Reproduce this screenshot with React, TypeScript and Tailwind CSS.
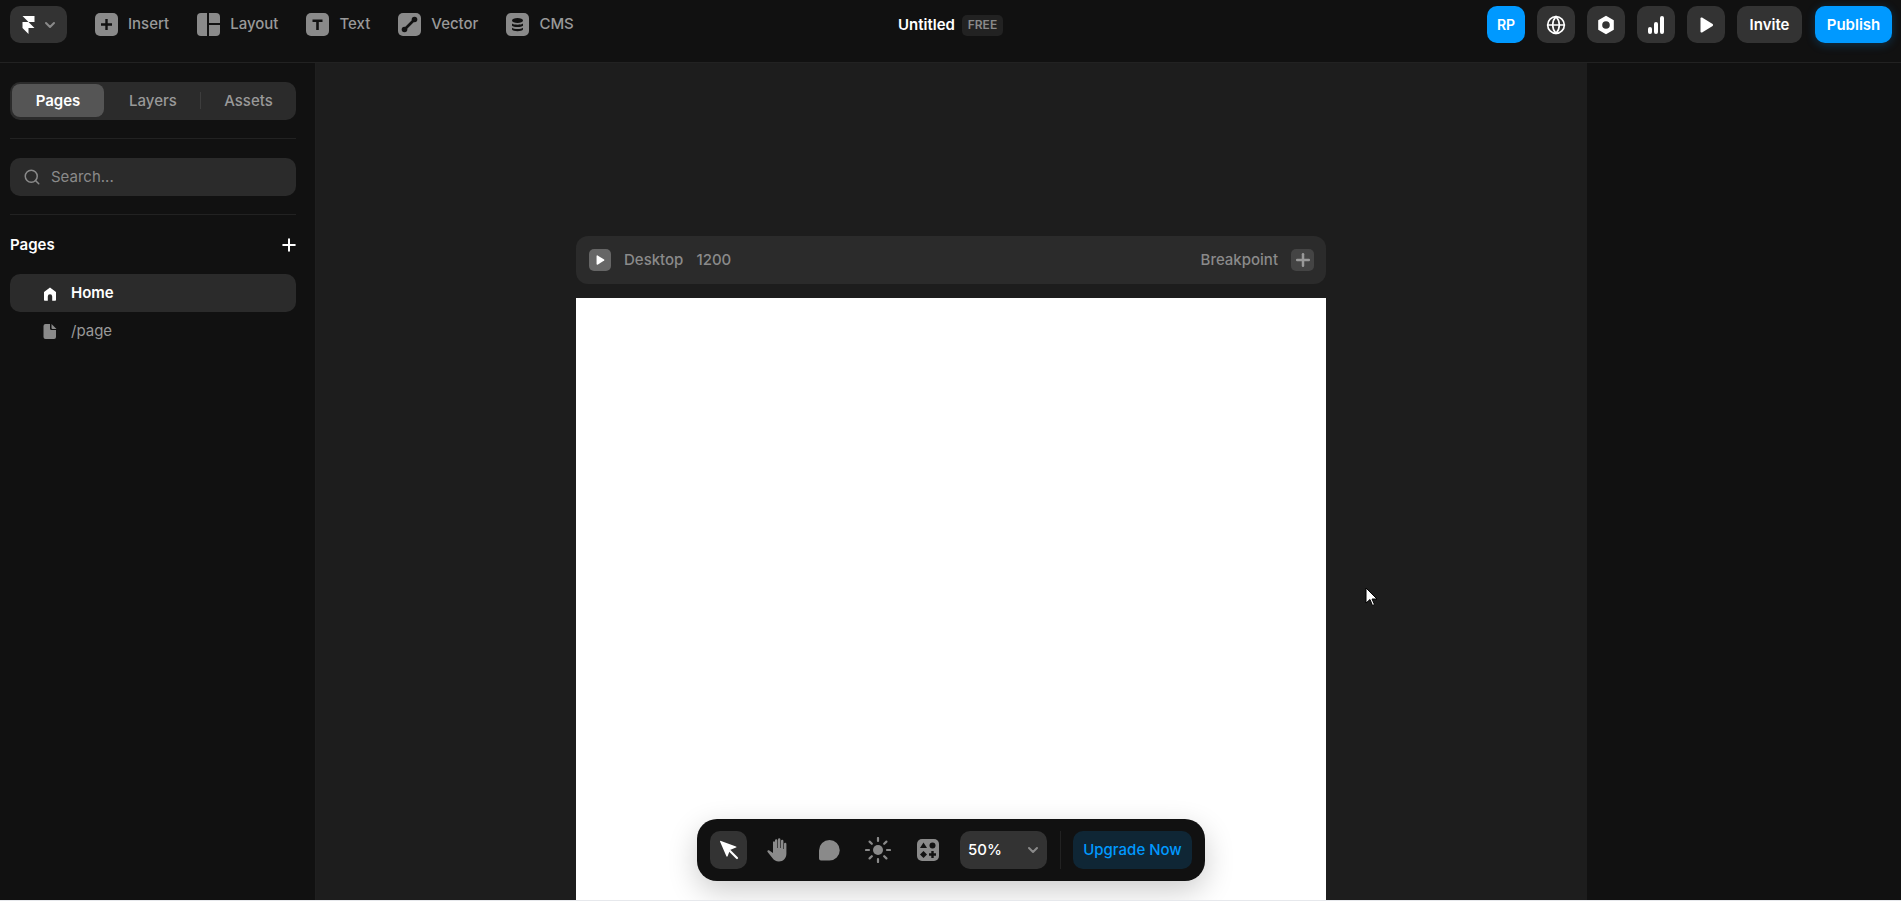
import { ChevronDown, Globe, Plus, Search } from "lucide-react";

const labelFont = { fontFamily: "Inter, sans-serif" };

const ToolIcon = ({ children }: { children: React.ReactNode }) => (
  <svg width="23" height="23" viewBox="0 0 23 23" className="shrink-0">
    {children}
  </svg>
);

const InsertIcon = () => (
  <ToolIcon>
    <rect width="23" height="23" rx="5" fill="#8a8a8a" />
    <path d="M11.5 6v11M6 11.5h11" stroke="#111" strokeWidth="2.4" />
  </ToolIcon>
);

const LayoutIcon = () => (
  <ToolIcon>
    <path d="M4 0h6v23H4a4 4 0 0 1-4-4V4a4 4 0 0 1 4-4z" fill="#8a8a8a" />
    <path d="M12 0h7a4 4 0 0 1 4 4v6H12z" fill="#8a8a8a" />
    <path d="M12 12h11v7a4 4 0 0 1-4 4h-7z" fill="#8a8a8a" />
  </ToolIcon>
);

const TextIcon = () => (
  <ToolIcon>
    <rect width="23" height="23" rx="5" fill="#8a8a8a" />
    <path d="M6.500 6.500h10v2.600h-3.700V17h-2.600V9.100H6.500z" fill="#111" />
  </ToolIcon>
);

const VectorIcon = () => (
  <ToolIcon>
    <rect width="23" height="23" rx="5" fill="#8a8a8a" />
    <path d="M7 16l9-9" stroke="#111" strokeWidth="2.6" />
    <circle cx="6.500" cy="16.500" r="2.800" fill="#111" />
    <circle cx="16.500" cy="6.500" r="2.800" fill="#111" />
  </ToolIcon>
);

const CmsIcon = () => (
  <ToolIcon>
    <rect width="23" height="23" rx="5" fill="#8a8a8a" />
    <ellipse cx="11.500" cy="7.500" rx="5.500" ry="2.600" fill="#111" />
    <path d="M6 10.500c1.500 1.600 9.500 1.600 11 0v2.200c-1.500 1.800-9.500 1.800-11 0z" fill="#111" />
    <path d="M6 14.800c1.500 1.600 9.500 1.600 11 0v1.700c-1 2.300-10 2.300-11 0z" fill="#111" />
  </ToolIcon>
);

const FramerLogo = () => (
  <svg width="13" height="18" viewBox="0 0 16 24" className="shrink-0">
    <path d="M0 0h16v8H8z" fill="#fff" />
    <path d="M0 8h8l8 8H8v8L0 16z" fill="#fff" />
  </svg>
);

const HexIcon = () => (
  <svg width="20" height="20" viewBox="0 0 20 20">
    <path
      fillRule="evenodd"
      d="M10 .8l7.800 4.500v9.400L10 19.200l-7.800-4.500V5.300zM10 6.200a3.800 3.800 0 1 0 0 7.600 3.800 3.800 0 0 0 0-7.600z"
      fill="#fff"
    />
  </svg>
);

const BarsIcon = () => (
  <svg width="18" height="18" viewBox="0 0 18 18">
    <rect x="1" y="11" width="4" height="7" rx="2" fill="#fff" />
    <rect x="7" y="6" width="4" height="12" rx="2" fill="#fff" />
    <rect x="13" y="0" width="4" height="18" rx="2" fill="#fff" />
  </svg>
);

const PlayIcon = ({ size = 16 }: { size?: number }) => (
  <svg width={size} height={size} viewBox="0 0 16 16">
    <path d="M2.500 1.500c0-.8.900-1.300 1.600-.9l10.500 6.500c.6.400.6 1.400 0 1.800L4.100 15.400c-.7.400-1.600-.1-1.600-.9z" fill="#fff" />
  </svg>
);

const HomeIcon = () => (
  <svg width="14" height="14" viewBox="0 0 14 14">
    <path d="M7 .5L13 5v8a.8.800 0 0 1-.8.800H9.200V9.500a2.200 2.200 0 0 0-4.400 0v4.300H1.800A.8.800 0 0 1 1 13V5z" fill="#fff" />
  </svg>
);

const FileIcon = () => (
  <svg width="14" height="15" viewBox="0 0 14 15">
    <path d="M2.500 0H7v4.500A1.500 1.500 0 0 0 8.500 6H13v7a2 2 0 0 1-2 2H2.500a2 2 0 0 1-2-2V2a2 2 0 0 1 2-2z" fill="#8a8a8a" />
    <path d="M8.500 0L13.500 5H9.500a1 1 0 0 1-1-1z" fill="#8a8a8a" />
  </svg>
);

const CursorIcon = () => (
  <svg width="20" height="20" viewBox="0 0 20 20">
    <path d="M1 1.500c0-.5.500-.8 1-.6l15 5.500c.6.200.6 1 0 1.200l-6 2.400-2.400 6.200c-.2.600-1 .6-1.200 0z" fill="#fff" />
    <path d="M11 11l7 7" stroke="#fff" strokeWidth="2.200" strokeLinecap="round" />
  </svg>
);

const HandIcon = () => (
  <svg width="21" height="24" viewBox="0 0 21 24">
    <path
      d="M8 2.500a1.200 1.200 0 0 1 2.400 0V10h.6V1.500a1.200 1.200 0 0 1 2.400 0V10h.6V3a1.200 1.200 0 0 1 2.400 0v8h.6V6a1.200 1.200 0 0 1 2.400 0v9.500c0 4.500-3 8-7.500 8-3 0-5-1.500-6.500-3.500L.6 14c-.8-1 .7-2.300 1.700-1.400L6 15V4a1.100 1.100 0 0 1 2 0z"
      fill="#8a8a8a"
    />
  </svg>
);

const CommentIcon = () => (
  <svg width="21" height="21" viewBox="0 0 21 21">
    <path d="M10.500 0a10 10 0 0 1 0 20.500H2a2 2 0 0 1-2-2V10.500A10.500 10.500 0 0 1 10.500 0z" fill="#8a8a8a" />
  </svg>
);

const SunIcon = () => (
  <svg width="26" height="26" viewBox="0 0 26 26">
    <circle cx="13" cy="13" r="5" fill="#8a8a8a" />
    <path
      d="M13 1v3M13 22v3M1 13h3M22 13h3M4.600 4.600l2.200 2.200M19.200 19.200l2.200 2.200M4.600 21.400l2.200-2.200M19.200 6.800l2.200-2.200"
      stroke="#8a8a8a"
      strokeWidth="2.200"
      strokeLinecap="round"
    />
  </svg>
);

const ComponentsIcon = () => (
  <svg width="22" height="22" viewBox="0 0 22 22">
    <rect width="22" height="22" rx="5" fill="#8a8a8a" />
    <path d="M6.500 3.500l3.500 5.500H3z" fill="#111" />
    <circle cx="15.500" cy="6.500" r="3" fill="#111" />
    <path d="M6.500 12l3.500 3.500-3.500 3.500L3 15.500z" fill="#111" />
    <path d="M15.500 12v7M12 15.500h7" stroke="#111" strokeWidth="2.400" />
  </svg>
);

const navItems = [
  { label: "Insert", icon: <InsertIcon /> },
  { label: "Layout", icon: <LayoutIcon /> },
  { label: "Text", icon: <TextIcon /> },
  { label: "Vector", icon: <VectorIcon /> },
  { label: "CMS", icon: <CmsIcon /> },
];

const SquareButton = ({ children }: { children: React.ReactNode }) => (
  <button className="flex h-[37px] w-[38px] items-center justify-center rounded-[10px] bg-[#333333]">
    {children}
  </button>
);

export default function App() {
  return (
    <div className="h-[901px] w-[1901px] bg-[#e6e8ec]">
      <div
        className="relative flex h-[900px] w-[1901px] flex-col overflow-hidden bg-[#111111] text-[15px] font-medium"
        style={labelFont}
      >
        {/* Top bar */}
        <header className="grid h-[63px] shrink-0 grid-cols-[1fr_auto_1fr] items-start border-b border-[#222222] pt-[6px]">
          <div className="flex items-center pl-[10px]">
            <button className="flex h-[37px] w-[57px] items-center gap-[7px] rounded-[10px] bg-[#333333] pl-[12px]">
              <FramerLogo />
              <ChevronDown size={16} strokeWidth={3} color="#8a8a8a" className="shrink-0" />
            </button>
            <nav className="ml-[28px] flex h-[37px] items-center gap-[28px] text-[#999999]">
              {navItems.map((item) => (
                <div key={item.label} className="flex items-center gap-[10px]">
                  {item.icon}
                  <span>{item.label}</span>
                </div>
              ))}
            </nav>
          </div>
          <div className="mt-[8px] flex items-center gap-[7px]">
            <span className="font-semibold text-white">Untitled</span>
            <span className="flex h-[21px] w-[41px] items-center justify-center rounded-[5px] bg-[#222222] text-[12px] font-semibold text-[#8a8a8a]">
              FREE
            </span>
          </div>
          <div className="flex items-center justify-end gap-[12px] pr-[9px] font-semibold text-white">
            <button className="flex h-[37px] w-[38px] items-center justify-center rounded-[10px] bg-[#0099ff] text-[14px]">
              RP
            </button>
            <SquareButton>
              <Globe size={20} strokeWidth={2} color="#fff" />
            </SquareButton>
            <SquareButton>
              <HexIcon />
            </SquareButton>
            <SquareButton>
              <BarsIcon />
            </SquareButton>
            <SquareButton>
              <PlayIcon />
            </SquareButton>
            <button className="h-[37px] w-[65px] rounded-[10px] bg-[#333333] pt-[1px]">Invite</button>
            <button className="ml-[1px] h-[37px] w-[77px] rounded-[10px] bg-[#0099ff] pt-[1px] shadow-[0_2px_10px_rgba(0,153,255,0.25)]">
              Publish
            </button>
          </div>
        </header>

        <div className="flex min-h-0 flex-1">
          {/* Left sidebar */}
          <aside className="flex w-[316px] shrink-0 flex-col border-r border-[#1f1f1f] pt-[19px] pr-[19px] pl-[10px]">
            <div className="flex h-[38px] items-start rounded-[10px] bg-[#2b2b2b] p-[2px] text-[#999999]">
              <div className="flex h-[33px] w-[92px] items-center justify-center rounded-[8px] bg-[#555555] pt-[1px] font-semibold text-white">
                Pages
              </div>
              <div className="flex h-[33px] w-[96px] items-center justify-center pt-[1px] pl-[2px]">Layers</div>
              <div className="mt-[8px] h-[17px] w-px bg-[#3d3d3d]" />
              <div className="flex h-[33px] flex-1 items-center justify-center pt-[1px] pl-[2px]">Assets</div>
            </div>
            <div className="mt-[18px] h-px bg-[#222222]" />
            <div className="mt-[19px] flex h-[38px] items-center gap-[10px] rounded-[10px] bg-[#2b2b2b] pl-[13px] font-normal text-[#8a8a8a]">
              <Search size={18} strokeWidth={2} />
              <span>Search...</span>
            </div>
            <div className="mt-[18px] h-px bg-[#222222]" />
            <div className="mt-[20px] flex h-[20px] items-center justify-between font-semibold text-white">
              <span>Pages</span>
              <Plus size={20} strokeWidth={2.4} className="-mr-[3px]" />
            </div>
            <div className="mt-[19px] flex h-[38px] items-center gap-[14px] rounded-[10px] bg-[#2b2b2b] pt-[1px] pl-[33px] font-semibold text-white">
              <HomeIcon />
              <span>Home</span>
            </div>
            <div className="flex h-[38px] items-center gap-[14px] pl-[33px] font-normal text-[#999999]">
              <FileIcon />
              <span>/page</span>
            </div>
          </aside>

          {/* Canvas */}
          <main className="relative flex-1 overflow-hidden bg-[#1d1d1d] pt-[173px] pl-[260px]">
            <div className="flex h-[48px] w-[750px] items-center justify-between rounded-[12px] bg-[#2b2b2b] pr-[12px] pl-[13px] text-[#8a8a8a]">
              <div className="flex items-center">
                <span className="flex h-[22px] w-[22px] items-center justify-center rounded-[5px] bg-[#666666]">
                  <PlayIcon size={10} />
                </span>
                <span className="ml-[13px]">Desktop</span>
                <span className="ml-[13px]">1200</span>
              </div>
              <div className="flex items-center gap-[13px]">
                <span>Breakpoint</span>
                <span className="flex h-[22px] w-[23px] items-center justify-center rounded-[5px] bg-[#444444] text-[#999999]">
                  <Plus size={20} strokeWidth={3} />
                </span>
              </div>
            </div>
            <div className="mt-[14px] h-[602px] w-[750px] bg-white" />
            {/* Bottom toolbar */}
            <div className="absolute bottom-[19px] left-[381px] flex h-[62px] w-[508px] items-center rounded-[20px] bg-[#111111] pl-[13px] shadow-[0_10px_30px_rgba(0,0,0,0.2)]">
              <span className="flex h-[38px] w-[37px] items-center justify-center rounded-[10px] bg-[#333333]">
                <CursorIcon />
              </span>
              <span className="ml-[5px] flex w-[50px] justify-center">
                <HandIcon />
              </span>
              <span className="ml-[2px] flex w-[50px] justify-center">
                <CommentIcon />
              </span>
              <span className="-ml-[1px] flex w-[50px] justify-center">
                <SunIcon />
              </span>
              <span className="flex w-[50px] justify-center">
                <ComponentsIcon />
              </span>
              <div className="ml-[7px] flex h-[38px] w-[87px] items-center justify-between rounded-[10px] bg-[#333333] pr-[6px] pl-[8px] text-white">
                <span>50%</span>
                <ChevronDown size={16} strokeWidth={3} color="#8a8a8a" />
              </div>
              <div className="ml-[13px] h-[38px] w-px bg-[#222222]" />
              <button className="ml-[12px] h-[38px] w-[119px] rounded-[10px] bg-[#0f2635] text-[#0099ff]">
                Upgrade Now
              </button>
            </div>
          </main>

          <div className="w-[314px] shrink-0" />
        </div>

        <svg width="14" height="20" viewBox="0 0 14 20" className="absolute top-[587px] left-[1365px]">
          <path d="M1 1v15l4-3.500 2.500 6 2-1-2.500-5.500h5z" fill="#fff" stroke="#000" strokeWidth="1" />
        </svg>
      </div>
    </div>
  );
}
